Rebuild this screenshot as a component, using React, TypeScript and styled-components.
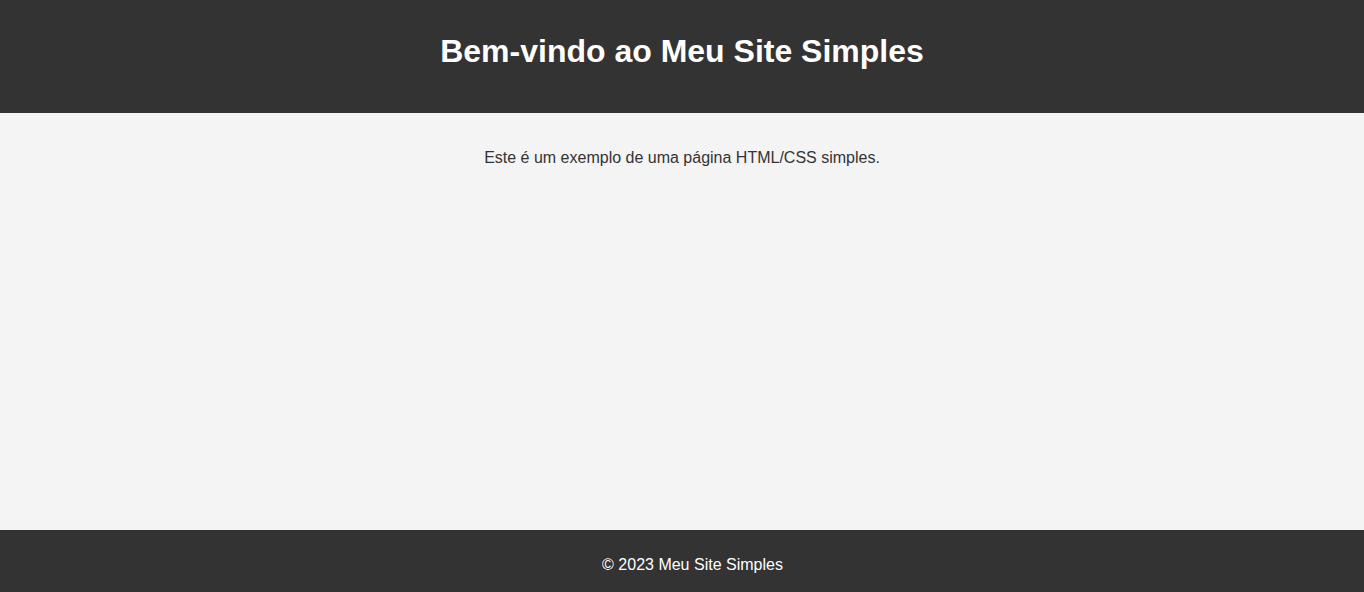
import React from "react";
import styled, { createGlobalStyle } from "styled-components";

const Global = createGlobalStyle`
  html, body { margin: 0; padding: 0; }
  body {
    font-family: "Liberation Sans", Arial, sans-serif;
    background: #f4f4f4;
    color: #333;
  }
`;

const Page = styled.div`
  display: flex;
  flex-direction: column;
  min-height: 100vh;
`;

const Header = styled.header`
  background: #333;
  color: #fff;
  text-align: center;
  padding: 33px 0 43px;
`;

const Title = styled.h1`
  margin: 0;
  font-size: 32px;
  font-weight: bold;
`;

const Main = styled.main`
  flex: 1;
  padding: 20px;
  text-align: center;
`;

const Text = styled.p`
  margin: 16px 0;
  font-size: 16px;
`;

const Footer = styled.footer`
  background: #333;
  color: #fff;
  text-align: center;
  padding: 26px 0 18px 21px;
  font-size: 16px;
`;

export default function App() {
  return (
    <>
      <Global />
      <Page>
        <Header>
          <Title>Bem-vindo ao Meu Site Simples</Title>
        </Header>
        <Main>
          <Text>Este é um exemplo de uma página HTML/CSS simples.</Text>
        </Main>
        <Footer>© 2023 Meu Site Simples</Footer>
      </Page>
    </>
  );
}
